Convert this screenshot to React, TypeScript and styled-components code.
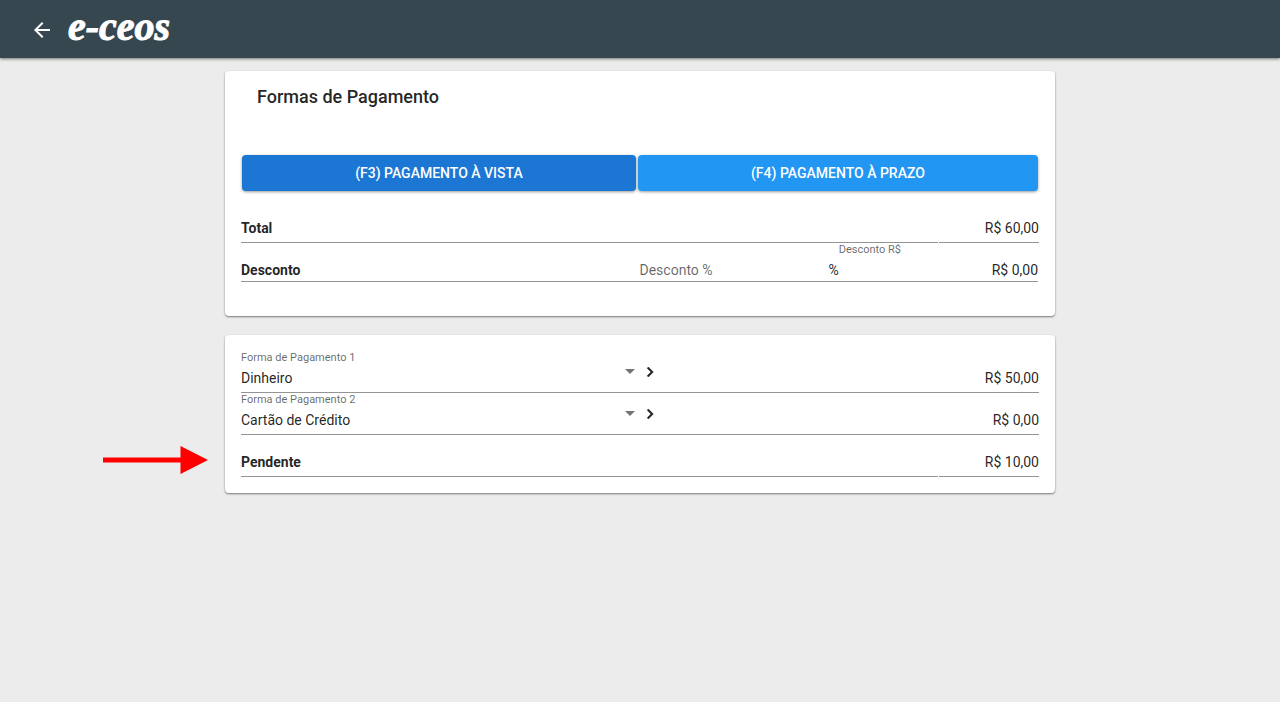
import React from "react";
import styled, { createGlobalStyle } from "styled-components";

const GlobalStyle = createGlobalStyle`
  *, *::before, *::after { box-sizing: border-box; }
  body {
    margin: 0;
    background: #ececec;
    color: rgba(0, 0, 0, 0.87);
    font: 400 14px/20px Roboto, sans-serif;
  }
  button, input, select { font: inherit; color: inherit; }
`;

const Header = styled.header`
  display: flex;
  align-items: center;
  gap: 14px;
  height: 58px;
  padding: 0 30px;
  background: #37474f;
  color: #fff;
  box-shadow: 0 1px 3px rgba(0, 0, 0, 0.5);
`;

const IconButton = styled.button<{ $width: number }>`
  display: flex;
  align-items: center;
  justify-content: center;
  flex: none;
  width: ${(p) => p.$width}px;
  height: 24px;
  padding: 0;
  border: 0;
  background: none;
  cursor: pointer;
`;

const BackButton = styled(IconButton)`
  margin-top: 2px;
`;

const Logo = styled.a`
  color: #fff;
  font: italic 700 40px/48px "Liberation Serif", serif;
  text-decoration: none;
  -webkit-text-stroke: 1px #fff;
  padding-bottom: 4px;
`;

const Main = styled.main`
  display: flex;
  flex-direction: column;
  gap: 19px;
  max-width: 830px;
  margin: 0 auto;
  padding: 13px 0;
`;

const Card = styled.section<{ $bottom: number }>`
  padding: 16px 16px ${(p) => p.$bottom}px;
  border-radius: 4px;
  background: #fff;
  box-shadow: 0 1px 2px rgba(0, 0, 0, 0.5);
`;

const Title = styled.h1`
  margin: 0 16px 48px;
  font-size: 18px;
  line-height: 20px;
  font-weight: 500;
`;

const Actions = styled.div`
  display: flex;
  gap: 2px;
  margin: 0 1px 10px;
`;

const ActionButton = styled.button<{ $color: string }>`
  flex: 1 1 auto;
  height: 36px;
  padding: 0 16px;
  border: 0;
  border-radius: 4px;
  background: ${(p) => p.$color};
  color: #fff;
  font-weight: 500;
  text-transform: uppercase;
  box-shadow: 0 1px 3px rgba(0, 0, 0, 0.4);
  cursor: pointer;
`;

const line = "1px solid #949494";

const SummaryRow = styled.div`
  position: relative;
  display: flex;
  gap: 1px;
  height: 42px;
`;

const SummaryCell = styled.div<{ $value?: boolean }>`
  display: flex;
  align-items: flex-end;
  justify-content: ${(p) => (p.$value ? "flex-end" : "flex-start")};
  flex: ${(p) => (p.$value ? "0 0 100px" : "1")};
  padding-bottom: 4px;
  border-bottom: ${line};
`;

const Name = styled.span`
  font-weight: 700;
`;

const DiscountRow = styled.div`
  display: grid;
  grid-template-columns: 2fr 1fr 1fr;
  align-items: end;
  margin-right: 1px;
  padding-bottom: 1px;
  border-bottom: ${line};
`;

const PaymentRow = styled.div`
  display: grid;
  grid-template-columns: 1fr 1fr;
  align-items: end;
  padding-bottom: 4px;
  border-bottom: ${line};
`;

const Amount = styled.div`
  display: flex;
  align-items: flex-end;
`;

const PaymentDetails = styled(IconButton)`
  margin-bottom: 4px;
`;

const Field = styled.div`
  position: relative;
  display: flex;
  flex-direction: column;
  gap: 3px;
  min-width: 0;
`;

const Percent = styled.div`
  display: flex;
`;

const Label = styled.label`
  color: rgba(0, 0, 0, 0.6);
  font-size: 11px;
  line-height: 14px;
`;

const Input = styled.input<{ $right?: boolean }>`
  width: 100%;
  min-width: 0;
  height: 20px;
  padding: 0;
  border: 0;
  outline: 0;
  background: none;
  text-align: ${(p) => (p.$right ? "right" : "left")};
  &::placeholder { color: rgba(0, 0, 0, 0.6); opacity: 1; }
`;

const Select = styled.select`
  appearance: none;
  width: 100%;
  height: 20px;
  padding: 0;
  border: 0;
  outline: 0;
  background: none;
`;

const Caret = styled.svg`
  position: absolute;
  right: 5px;
  top: 18px;
  pointer-events: none;
`;

const Pointer = styled.svg`
  position: absolute;
  right: calc(100% + 33px);
  top: 11px;
`;

const methods = ["Dinheiro", "Cartão de Crédito"];
const payments = [
  { method: "Dinheiro", amount: "R$ 50,00" },
  { method: "Cartão de Crédito", amount: "R$ 0,00" },
];

function Summary({ name, value, marked }: { name: string; value: string; marked?: boolean }) {
  return (
    <SummaryRow>
      <SummaryCell><Name>{name}</Name></SummaryCell>
      <SummaryCell $value>{value}</SummaryCell>
      {marked && (
        <Pointer width="105" height="28" viewBox="0 0 105 28" fill="#f00" aria-hidden="true">
          <path d="M0 11.5H77.500V0L105 14L77.500 28V16.500H0Z" />
        </Pointer>
      )}
    </SummaryRow>
  );
}

function Payment({ index, method, amount }: { index: number; method: string; amount: string }) {
  const id = `payment-${index}`;
  return (
    <PaymentRow>
      <Field>
        <Label htmlFor={id}>Forma de Pagamento {index}</Label>
        <Select id={id} defaultValue={method}>
          {methods.map((m) => <option key={m}>{m}</option>)}
        </Select>
        <Caret width="10" height="5" viewBox="0 0 10 5" fill="#757575" aria-hidden="true">
          <path d="M0 0H10L5 5Z" />
        </Caret>
      </Field>
      <Amount>
        <PaymentDetails $width={20} type="button" aria-label="Detalhes">
          <svg width="20" height="20" viewBox="0 0 24 24" fill="currentColor" aria-hidden="true">
            <path d="M8.590 16.590L13.170 12L8.590 7.410L10 6L16 12L10 18Z" stroke="currentColor" strokeWidth="0.500" />
          </svg>
        </PaymentDetails>
        <Input $right aria-label={`Valor ${index}`} defaultValue={amount} />
      </Amount>
    </PaymentRow>
  );
}

export default function App() {
  return (
    <>
      <GlobalStyle />
      <Header>
        <BackButton $width={24} type="button" aria-label="Voltar">
          <svg width="24" height="24" viewBox="0 0 24 24" fill="#fff" aria-hidden="true">
            <path d="M20 11H7.830l5.590-5.590L12 4l-8 8 8 8 1.410-1.410L7.830 13H20v-2z" />
          </svg>
        </BackButton>
        <Logo href="#">e-ceos</Logo>
      </Header>
      <Main>
        <Card $bottom={34}>
          <Title>Formas de Pagamento</Title>
          <Actions>
            <ActionButton type="button" $color="#1b76d4">(F3) Pagamento à vista</ActionButton>
            <ActionButton type="button" $color="#2196f3">(F4) Pagamento à prazo</ActionButton>
          </Actions>
          <Summary name="Total" value="R$ 60,00" />
          <DiscountRow>
            <Name>Desconto</Name>
            <Percent>
              <Input aria-label="Desconto %" placeholder="Desconto %" />
              <span>%</span>
            </Percent>
            <Field>
              <Label htmlFor="discount">Desconto R$</Label>
              <Input $right id="discount" defaultValue="R$ 0,00" />
            </Field>
          </DiscountRow>
        </Card>
        <Card $bottom={16}>
          {payments.map((p, i) => <Payment key={p.method} index={i + 1} {...p} />)}
          <Summary name="Pendente" value="R$ 10,00" marked />
        </Card>
      </Main>
    </>
  );
}
